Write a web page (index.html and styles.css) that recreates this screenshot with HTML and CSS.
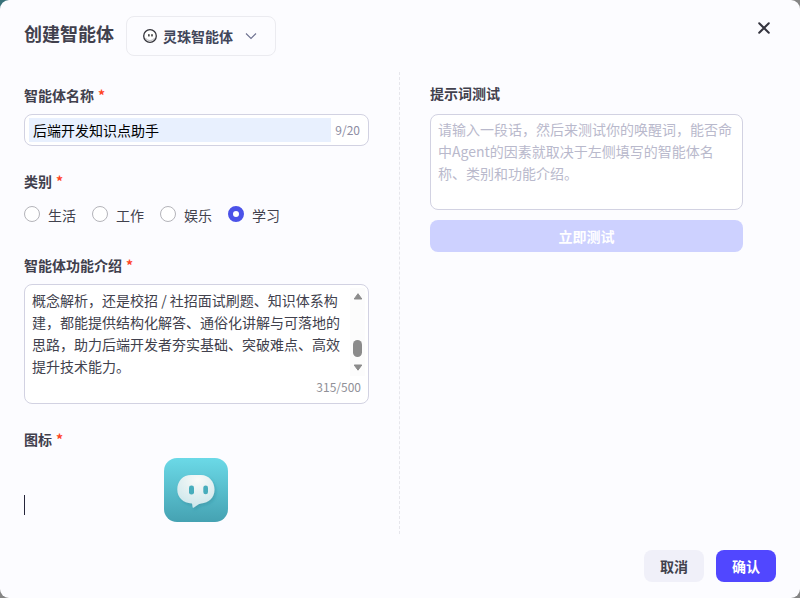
FILE: index.html
```html
<!DOCTYPE html>
<html lang="zh-CN">
<head>
    <meta charset="UTF-8">
    <meta name="viewport" content="width=device-width, initial-scale=1.0">
    <title>创建智能体</title>
    <link rel="stylesheet" href="styles.css">
</head>
<body>
    <div class="modal">
        <div class="modal-header">
            <h1 class="modal-title">创建智能体</h1>
            <button class="agent-select" type="button">
                <svg class="agent-icon" width="16" height="16" viewBox="0 0 16 16">
                    <circle cx="8" cy="8" r="6.3" fill="#fff" stroke="#34343b" stroke-width="1.3"/>
                    <path d="M3.2 10.2Q8 15.2 12.8 10.2" fill="none" stroke="#c4c4c8" stroke-width="1.2"/>
                    <rect x="6.2" y="6.1" width="1.4" height="2.5" rx=".7" fill="#222"/>
                    <rect x="9.3" y="6.1" width="1.4" height="2.5" rx=".7" fill="#222"/>
                </svg>
                <span class="agent-name">灵珠智能体</span>
                <svg width="12" height="12" viewBox="0 0 12 12">
                    <path d="M1 3.5L6 8.5L11 3.5" fill="none" stroke="#6d7190" stroke-width="1.1"/>
                </svg>
            </button>
            <button class="close" type="button" aria-label="关闭">
                <svg width="14" height="14" viewBox="0 0 14 14">
                    <path d="M2.2 2.2L11.8 11.8M11.8 2.2L2.2 11.8" stroke="#34343f" stroke-width="2" stroke-linecap="round"/>
                </svg>
            </button>
        </div>

        <div class="modal-body">
            <div class="form">
                <div class="label">智能体名称<span class="required">*</span></div>
                <div class="input-box">
                    <input class="name-input" type="text" value="后端开发知识点助手">
                    <span class="counter">9/20</span>
                </div>

                <div class="label label-type">类别<span class="required">*</span></div>
                <div class="radios">
                    <div class="radio"><span class="dot"></span>生活</div>
                    <div class="radio"><span class="dot"></span>工作</div>
                    <div class="radio"><span class="dot"></span>娱乐</div>
                    <div class="radio"><span class="dot checked"></span>学习</div>
                </div>

                <div class="label label-desc">智能体功能介绍<span class="required">*</span></div>
                <div class="desc-box">
                    <div class="desc-row">
                        <div class="desc-text">概念解析，还是校招 / 社招面试刷题、知识体系构<br>建，都能提供结构化解答、通俗化讲解与可落地的<br>思路，助力后端开发者夯实基础、突破难点、高效<br>提升技术能力。</div>
                        <div class="scrollbar">
                            <svg width="10" height="7" viewBox="0 0 10 7"><path d="M5 .7L8.8 6H1.2Z" fill="#8b8b8b" stroke="#8b8b8b" stroke-linejoin="round"/></svg>
                            <div class="thumb"></div>
                            <svg width="10" height="7" viewBox="0 0 10 7"><path d="M5 6.2L8.8 1H1.2Z" fill="#8b8b8b" stroke="#8b8b8b" stroke-linejoin="round"/></svg>
                        </div>
                    </div>
                    <div class="desc-count">315/500</div>
                </div>

                <div class="label label-icon">图标<span class="required">*</span></div>
                <div class="icon-row">
                    <span class="caret"></span>
                    <svg class="avatar" width="64" height="64" viewBox="0 0 64 64">
                        <defs>
                            <linearGradient id="bg" x1="0" y1="0" x2="0" y2="1">
                                <stop offset="0" stop-color="#6bd9e7"/>
                                <stop offset="1" stop-color="#45a2b2"/>
                            </linearGradient>
                            <radialGradient id="face" cx=".55" cy=".15" r=".9">
                                <stop offset="0" stop-color="#fafaf8"/>
                                <stop offset="1" stop-color="#c8e5ea"/>
                            </radialGradient>
                            <filter id="shadow" x="-20%" y="-20%" width="150%" height="150%">
                                <feDropShadow dx="1.5" dy="2" stdDeviation="1.5" flood-color="#227888" flood-opacity=".3"/>
                            </filter>
                        </defs>
                        <rect width="64" height="64" rx="13" fill="url(#bg)"/>
                        <path filter="url(#shadow)" fill="url(#face)" d="M27 17H37C45 17 50.500 24 50.500 31.500C50.500 40 44.500 45 37 45.500C33.500 46 32 48.500 29 50C28.300 49 28.500 47 28 45.500C19 45 13.300 39.500 13.300 31.500C13.300 23 19 17 27 17Z"/>
                        <rect x="25" y="27.500" width="5" height="9" rx="2.300" fill="#47adbc"/>
                        <rect x="39.300" y="27.500" width="4.700" height="8.700" rx="2.300" fill="#47adbc"/>
                    </svg>
                </div>
            </div>

            <div class="test">
                <div class="label">提示词测试</div>
                <textarea class="test-input" placeholder="请输入一段话，然后来测试你的唤醒词，能否命中Agent的因素就取决于左侧填写的智能体名称、类别和功能介绍。"></textarea>
                <button class="btn btn-test" type="button">立即测试</button>
            </div>
        </div>

        <div class="modal-footer">
            <button class="btn btn-cancel" type="button">取消</button>
            <button class="btn btn-confirm" type="button">确认</button>
        </div>
    </div>
</body>
</html>
```

FILE: styles.css
```css
* {
    box-sizing: border-box;
}

body {
    margin: 0;
    background: linear-gradient(90deg, #39727a 0, #39727a 20px, #858585 20px) no-repeat 0 0 / 100% 20px, #858585;
    font-family: "Noto Sans CJK SC", sans-serif;
    font-size: 14px;
    line-height: 22px;
    color: #41414d;
}

button,
input,
textarea {
    font: inherit;
    outline: none;
}

.modal {
    display: flex;
    flex-direction: column;
    height: 598px;
    padding: 16px 24px;
    background: #fcfcff;
    border-radius: 9px;
}

.modal-header {
    display: flex;
    align-items: center;
    height: 40px;
}

.modal-title {
    margin: 0 12px 6px 0;
    font-size: 18px;
    line-height: 26px;
    font-weight: 600;
    color: #41404d;
}

.agent-select {
    display: flex;
    align-items: center;
    width: 150px;
    height: 40px;
    padding: 0 16px 0 15px;
    background: #fcfcff;
    border: 1px solid #ebebf0;
    border-radius: 8px;
}

.agent-name {
    margin: 0 12px 0 5px;
    font-weight: 600;
    color: #41465a;
}

.close {
    display: flex;
    margin: 0 5px 16px auto;
    padding: 0;
    background: none;
    border: 0;
}

.modal-body {
    display: flex;
    height: 462px;
    margin-top: 16px;
}

.form {
    width: 376px;
    padding: 12px 30px 0 0;
    border-right: 1px dashed #e6e6ec;
}

.label {
    height: 22px;
    font-weight: 600;
    color: #41404d;
}

.required {
    margin-left: 4px;
    color: #ff441f;
}

.input-box {
    display: flex;
    align-items: center;
    height: 32px;
    margin-top: 8px;
    padding: 0 8px 0 4px;
    background: #fff;
    border: 1px solid #d2d2e2;
    border-radius: 8px;
}

.name-input {
    flex: 1;
    min-width: 0;
    height: 24px;
    margin-right: 4px;
    padding: 0 4px;
    background: #e8f0fe;
    border: 0;
    color: #000;
}

.counter {
    font-size: 12px;
    color: #8d8da3;
}

.label-type {
    margin-top: 24px;
}

.radios {
    display: flex;
    gap: 16px;
    margin-top: 12px;
}

.radio {
    display: flex;
    align-items: center;
    gap: 8px;
}

.dot {
    width: 16px;
    height: 16px;
    margin-bottom: 2px;
    background: #fff;
    border: 1px solid #b4b4ba;
    border-radius: 50%;
}

.dot.checked {
    border: 5px solid #4b52e8;
}

.label-desc {
    margin-top: 28px;
}

.desc-box {
    height: 120px;
    margin-top: 8px;
    padding: 3px 3px 0 7px;
    background: #fff;
    border: 1px solid #d2d2e2;
    border-radius: 8px;
}

.desc-row {
    display: flex;
    justify-content: space-between;
    height: 88px;
}

.desc-text {
    padding-top: 1px;
    white-space: nowrap;
}

.scrollbar {
    display: flex;
    flex-direction: column;
    align-items: center;
    width: 15px;
    padding: 5px 0;
    background: #fcfcfc;
}

.thumb {
    width: 9px;
    height: 17px;
    margin: auto 0 7px;
    background: #8b8b8b;
    border-radius: 5px;
}

.desc-count {
    padding-right: 4px;
    font-size: 12px;
    text-align: right;
    color: #909097;
}

.label-icon {
    margin-top: 24px;
}

.icon-row {
    display: flex;
    align-items: flex-end;
    margin-top: 8px;
}

.caret {
    width: 1px;
    height: 20px;
    margin: 0 139px 7px 0;
    background: #25253a;
}

.test {
    width: 343px;
    padding: 10px 0 0 30px;
}

.test-input {
    display: block;
    width: 313px;
    height: 96px;
    margin-top: 10px;
    padding: 3px 7px;
    background: #fff;
    border: 1px solid #d2d2e2;
    border-radius: 8px;
    resize: none;
}

.test-input::placeholder {
    color: #b9b9cc;
}

.btn {
    height: 32px;
    padding: 0;
    border: 0;
    border-radius: 8px;
    font-weight: 600;
}

.btn-test {
    width: 313px;
    margin-top: 10px;
    background: #cdd1ff;
    color: #fff;
}

.modal-footer {
    display: flex;
    justify-content: flex-end;
    gap: 12px;
    margin-top: 16px;
}

.btn-cancel {
    width: 60px;
    background: #f0f0f9;
    color: #41414d;
}

.btn-confirm {
    width: 60px;
    background: #5147ff;
    color: #fff;
}
```
